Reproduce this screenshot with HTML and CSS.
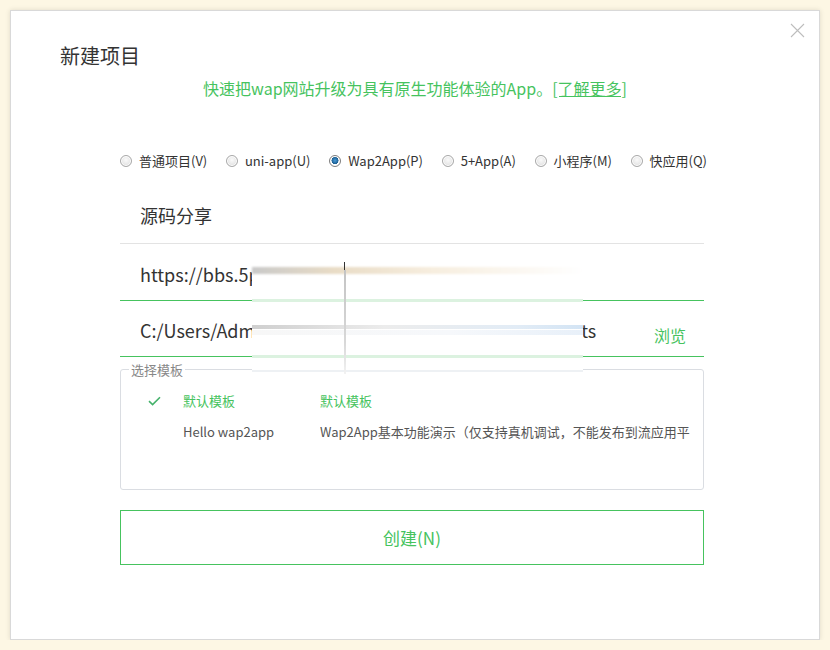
FILE: index.html
```html
<!DOCTYPE html>
<html lang="zh-CN">
<head>
<meta charset="utf-8">
<title>新建项目</title>
<link rel="stylesheet" href="styles.css">
</head>
<body>
<div class="dialog">
  <button class="close" aria-label="关闭">
    <svg width="15" height="15" viewBox="0 0 15 15"><path d="M1 1L14 14M14 1L1 14" stroke="#bdbdbd" stroke-width="1.1" fill="none"/></svg>
  </button>
  <h1 class="title">新建项目</h1>
  <p class="subtitle">快速把wap网站升级为具有原生功能体验的App。<a class="more" href="#">[了解更多]</a></p>

  <div class="radios">
    <label class="radio"><span class="dot"></span>普通项目(V)</label>
    <label class="radio"><span class="dot"></span>uni-app(U)</label>
    <label class="radio"><span class="dot on"></span>Wap2App(P)</label>
    <label class="radio"><span class="dot"></span>5+App(A)</label>
    <label class="radio"><span class="dot"></span>小程序(M)</label>
    <label class="radio"><span class="dot"></span>快应用(Q)</label>
  </div>

  <div class="form">
    <div class="field name">源码分享</div>
    <div class="field green url">https://bbs.5plus.cn/thread-</div>
    <div class="field green path"><span class="ptext">C:/Users/Adm<span class="hid">inistrator/Documents/HBuilderProjec</span>ts</span><a class="browse" href="#">浏览</a></div>

    <fieldset class="tpl">
      <legend>选择模板</legend>
      <div class="row sel">
        <span class="chk"><svg width="13" height="10" viewBox="0 0 13 10"><path d="M1 5.2L4.6 8.6L12 1.2" stroke="#45b26b" stroke-width="1.6" fill="none"/></svg></span>
        <span class="c1">默认模板</span>
        <span class="c2">默认模板</span>
      </div>
      <div class="row">
        <span class="chk"></span>
        <span class="c1">Hello wap2app</span>
        <span class="c2 desc">Wap2App基本功能演示（仅支持真机调试，不能发布到流应用平台）</span>
      </div>
    </fieldset>

    <button class="create">创建(N)</button>

    <div class="mask">
      <div class="s1"></div>
      <div class="g1"></div>
      <div class="s2"></div>
      <div class="s2b"></div>
      <div class="g2"></div>
      <div class="g3"></div>
      <div class="cur"></div>
      <div class="vline"></div>
    </div>
  </div>
</div>
</body>
</html>
```

FILE: styles.css
```css
* { box-sizing: border-box; }
html, body {
  margin: 0;
  padding: 0;
  background: #fdf7e4;
  font-family: "Noto Sans CJK SC", "Noto Sans", sans-serif;
  color: #333;
}
.dialog {
  position: relative;
  margin: 10px 0 0 10px;
  width: 810px;
  height: 630px;
  background: #fff;
  border: 1px solid #d9d9d9;
  box-shadow: 0 0 5px rgba(0, 0, 0, 0.12);
}
.close {
  position: absolute;
  top: 12px;
  right: 14px;
  width: 15px;
  height: 15px;
  padding: 0;
  border: 0;
  background: none;
}
.close svg { display: block; }
.title {
  margin: 31px 0 0 49px;
  font-size: 20px;
  line-height: 28px;
  font-weight: normal;
  color: #333;
}
.subtitle {
  margin: 7px 0 0 0;
  text-align: center;
  font-size: 16px;
  line-height: 22px;
  color: #46c35e;
}
.more { color: #46c35e; text-decoration: underline; }

.radios {
  display: flex;
  justify-content: space-between;
  margin: 52px 0 0 109px;
  width: 587px;
  font-size: 13px;
  line-height: 20px;
  color: #333;
}
.radio { display: flex; align-items: center; gap: 7px; }
.dot {
  width: 12px;
  height: 12px;
  border-radius: 50%;
  border: 1px solid #a9a9a9;
  background: radial-gradient(circle at 50% 40%, #fafafa 0, #e8e8e8 55%, #d0d0d0 100%);
  box-shadow: inset 0 0 0 1px #fff;
}
.dot.on {
  background: radial-gradient(circle at 50% 45%, #4a9ad6 0, #1b5f93 45%, #fff 50%, #e9e9e9 100%);
  border-color: #7d7d7d;
}

.form {
  position: relative;
  margin: 17px 0 0 109px;
  width: 584px;
}
.field {
  display: flex;
  align-items: center;
  height: 56px;
  padding-left: 20px;
  padding-bottom: 1px;
  font-size: 18px;
  border-bottom: 1px solid #e3e3e3;
  white-space: nowrap;
  overflow: hidden;
}
.field.green { border-bottom-color: #46c35e; padding-top: 3px; }
.field.url { height: 57px; padding-top: 5px; }
.path { justify-content: space-between; padding-right: 18px; }
.ptext { flex: none; }
.hid {
  display: inline-block;
  width: 326px;
  overflow: hidden;
  vertical-align: bottom;
  white-space: nowrap;
}
.browse {
  flex: none;
  align-self: flex-end;
  margin-bottom: 8px;
  font-size: 16px;
  color: #46c35e;
  text-decoration: none;
}

.tpl {
  min-width: 0;
  width: 584px;
  margin: 4px 0 0 0;
  padding: 7px 10px 26px 0;
  border: 1px solid #dadde2;
  border-radius: 3px;
  height: 129px;
  font-size: 13px;
}
.tpl legend {
  margin-left: 8px;
  padding: 0 2px;
  color: #888;
  font-size: 13px;
  line-height: 17px;
}
.row {
  display: flex;
  align-items: center;
  height: 31px;
  white-space: nowrap;
  color: #555;
  overflow: hidden;
}
.row.sel { color: #46c35e; }
.chk { flex: none; width: 62px; padding-left: 27px; display: flex; align-items: center; }
.c1 { flex: none; width: 137px; }
.c2 { overflow: hidden; min-width: 0; }
.desc { flex: none; width: 370px; }

.create {
  display: block;
  margin-top: 20px;
  width: 584px;
  height: 55px;
  border: 1px solid #46c35e;
  background: #fff;
  color: #46c35e;
  font-family: inherit;
  font-size: 17px;
}

.mask {
  position: absolute;
  left: 132px;
  top: 74px;
  width: 331px;
  height: 112px;
  background: #fff;
}
.mask div { position: absolute; }
.s1 {
  left: 0; top: 5px; width: 331px; height: 7px;
  background: linear-gradient(to right, #c9c9c9 0, #e9dcc6 25%, #f7eedf 55%, #fff 100%);
  filter: blur(1px);
}
.g1 { left: 0; top: 37px; width: 331px; height: 3px; background: #dcf2e0; }
.s2 {
  left: 0; top: 63px; width: 331px; height: 4px;
  background: linear-gradient(to right, #cfcfcf 0, #ececec 40%, #e2ecf6 80%, #d3e4f4 100%);
}
.s2b {
  left: 0; top: 68px; width: 331px; height: 5px;
  background: linear-gradient(to right, #f7f7f7 0, #f6f8fb 60%, #e8f0f9 100%);
}
.g2 { left: 0; top: 93px; width: 331px; height: 3px; background: #dcf2e0; }
.g3 { left: 0; top: 108px; width: 331px; height: 2px; background: #eef1f4; }
.cur { left: 92px; top: 0; width: 1px; height: 8px; background: #333; }
.vline { left: 92px; top: 8px; width: 2px; height: 104px; background: linear-gradient(#c4c4c4, #d8d8d8 70%, #f2f2f2); }
```
